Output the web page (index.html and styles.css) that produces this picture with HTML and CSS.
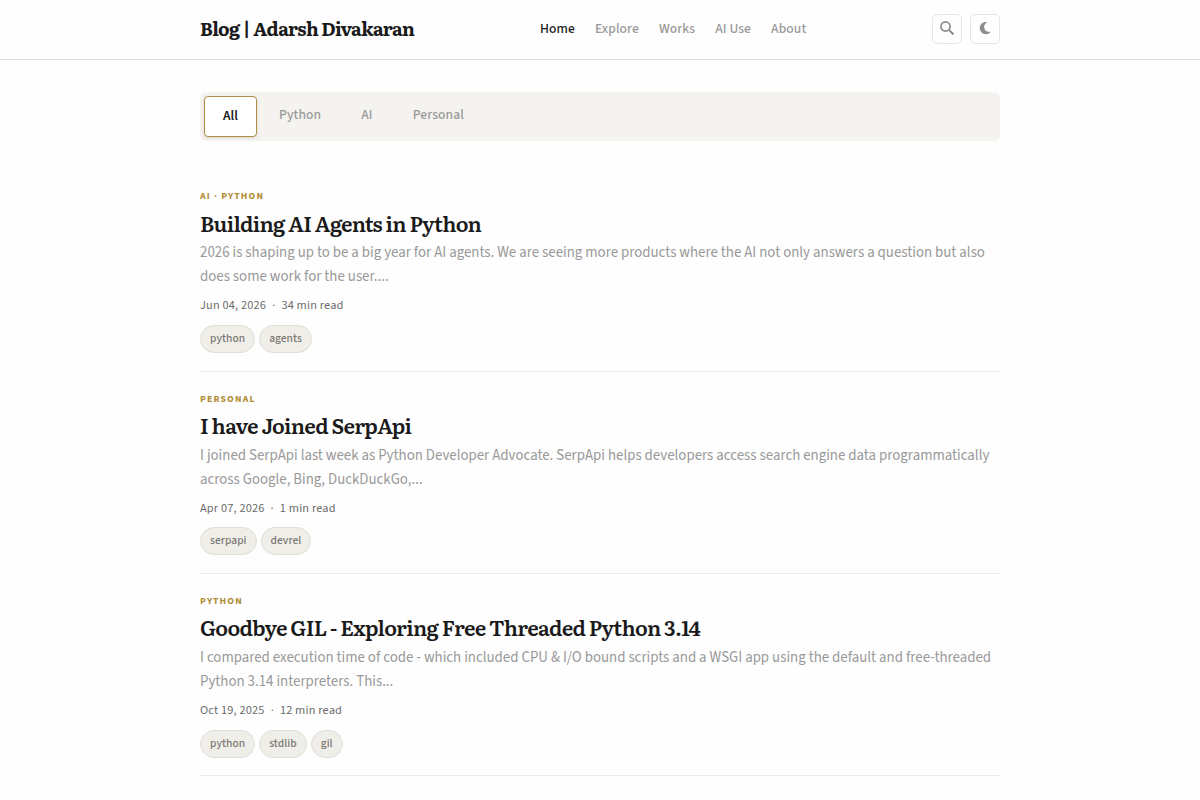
FILE: index.html
```html
<!DOCTYPE html>
<html lang="en">
<head>
  <meta charset="UTF-8" />
  <meta name="viewport" content="width=device-width, initial-scale=1.0" />
  <title>Blog | Adarsh Divakaran</title>
  <link rel="stylesheet" href="styles.css">
</head>
<body>
  <header>
    <div class="header-inner">
      <a class="brand" href="#">Blog | Adarsh Divakaran</a>
      <nav>
        <a class="active" href="#">Home</a>
        <a href="#">Explore</a>
        <a href="#">Works</a>
        <a href="#">AI Use</a>
        <a href="#">About</a>
      </nav>
      <div class="actions">
        <button aria-label="Search">
          <svg width="14" height="14" viewBox="0 0 14 14" fill="none" stroke="currentColor">
            <circle cx="5.5" cy="5.5" r="4.6" stroke-width="1.7" />
            <path d="M9 9L13.4 13.4" stroke-width="2" />
          </svg>
        </button>
        <button aria-label="Dark mode">
          <svg width="14" height="14" viewBox="0 0 384 512" fill="currentColor">
            <path d="M223.500 32C100 32 0 132.300 0 256s100 224 223.500 224c60.600 0 115.500-24.200 155.800-63.400 5-4.900 6.300-12.500 3.100-18.700s-10.100-9.700-17-8.500c-9.800 1.700-19.800 2.600-30.100 2.600-96.900 0-175.500-78.800-175.500-176 0-65.800 36-123.100 89.300-153.300 6.100-3.500 9.200-10.500 7.700-17.300s-7.300-11.900-14.300-12.500c-6.300-.5-12.600-.8-19-.8z" />
          </svg>
        </button>
      </div>
    </div>
  </header>

  <main>
    <div class="filters">
      <button class="active">All</button>
      <button>Python</button>
      <button>AI</button>
      <button>Personal</button>
    </div>

    <article class="post">
      <div class="category">AI · Python</div>
      <h2>Building AI Agents in Python</h2>
      <p>2026 is shaping up to be a big year for AI agents. We are seeing more products where the AI not only answers a question but also does some work for the user....</p>
      <div class="meta"><span>Jun 04, 2026</span><span>·</span><span>34 min read</span></div>
      <div class="tags"><a href="#">python</a><a href="#">agents</a></div>
    </article>

    <article class="post">
      <div class="category">Personal</div>
      <h2>I have Joined SerpApi</h2>
      <p>I joined SerpApi last week as Python Developer Advocate. SerpApi helps developers access search engine data programmatically across Google, Bing, DuckDuckGo,...</p>
      <div class="meta"><span>Apr 07, 2026</span><span>·</span><span>1 min read</span></div>
      <div class="tags"><a href="#">serpapi</a><a href="#">devrel</a></div>
    </article>

    <article class="post">
      <div class="category">Python</div>
      <h2>Goodbye GIL - Exploring Free Threaded Python 3.14</h2>
      <p>I compared execution time of code - which included CPU &amp; I/O bound scripts and a WSGI app using the default and free-threaded Python 3.14 interpreters. This...</p>
      <div class="meta"><span>Oct 19, 2025</span><span>·</span><span>12 min read</span></div>
      <div class="tags"><a href="#">python</a><a href="#">stdlib</a><a href="#">gil</a></div>
    </article>
  </main>
</body>
</html>
```
FILE: styles.css
```css
* {
  margin: 0;
  padding: 0;
  box-sizing: border-box;
}
body {
  font-family: "Source Sans 3", "Noto Sans CJK SC", sans-serif;
  background-color: #fefefe;
  color: #1a1a1a;
}
a {
  color: inherit;
  text-decoration: none;
}
button {
  font-family: inherit;
  cursor: pointer;
}
header {
  height: 60px;
  border-bottom: 1px solid #dfdfdf;
}
.header-inner {
  display: grid;
  grid-template-columns: 340px 1fr auto;
  align-items: center;
  width: 800px;
  height: 58px;
  margin: 0 auto;
}
.brand {
  font-family: Literata, "Liberation Serif", serif;
  font-size: 18.5px;
  font-weight: bold;
  letter-spacing: -0.64px;
  padding-bottom: 3px;
}
nav {
  display: flex;
  gap: 20px;
  padding-bottom: 2px;
  font-size: 13.6px;
  font-weight: 500;
  letter-spacing: 0.1px;
  color: #999;
}
nav .active {
  color: #1a1a1a;
}
.actions {
  display: flex;
  gap: 8px;
}
.actions button {
  display: flex;
  align-items: center;
  justify-content: center;
  width: 30px;
  height: 30px;
  border: 1px solid #e5e5e5;
  border-radius: 5px;
  background: transparent;
  color: #8c8c8c;
}
.actions svg {
  margin-top: -2px;
}
main {
  width: 800px;
  margin: 32px auto 0;
}
.filters {
  display: flex;
  gap: 4px;
  height: 49px;
  padding: 4px;
  margin-bottom: 28.8px;
  border-radius: 6px;
  background: #f5f3ef;
}
.filters button {
  height: 37px;
  padding: 0 18px;
  border: 0;
  background: transparent;
  font-size: 13.6px;
  font-weight: 500;
  letter-spacing: 0.12px;
  color: #999;
}
.filters .active {
  height: 41px;
  padding-bottom: 2px;
  border: 1px solid #b08d45;
  border-radius: 4px;
  background: #fff;
  color: #1a1a1a;
  font-weight: 600;
  letter-spacing: 0;
  box-shadow: 0 1px 3px rgba(0, 0, 0, 0.12);
}
.post {
  height: 202.2px;
  padding-top: 18.6px;
  border-bottom: 1px solid #ebebeb;
}
.category {
  font-size: 9.8px;
  line-height: 16px;
  font-weight: bold;
  letter-spacing: 1.15px;
  text-transform: uppercase;
  color: #b08d35;
}
h2 {
  font-family: Literata, "Liberation Serif", serif;
  font-size: 21px;
  line-height: 28px;
  font-weight: 600;
  letter-spacing: -0.66px;
  margin-top: 4.5px;
}
.post p {
  margin-top: 4.5px;
  font-size: 14.86px;
  line-height: 24px;
  color: #999;
}
.meta {
  display: flex;
  gap: 6px;
  margin-top: 7px;
  font-size: 12.3px;
  line-height: 18px;
  letter-spacing: 0.18px;
  color: #6b6b6b;
}
.tags {
  display: flex;
  gap: 4px;
  margin-top: 10.8px;
}
.tags a {
  height: 28px;
  padding: 0 9px;
  border: 1px solid #e2dfd8;
  border-radius: 14px;
  background: #f0eee9;
  font-size: 11.5px;
  line-height: 25px;
  font-weight: 500;
  letter-spacing: 0.04px;
  color: #7a7873;
}
```
